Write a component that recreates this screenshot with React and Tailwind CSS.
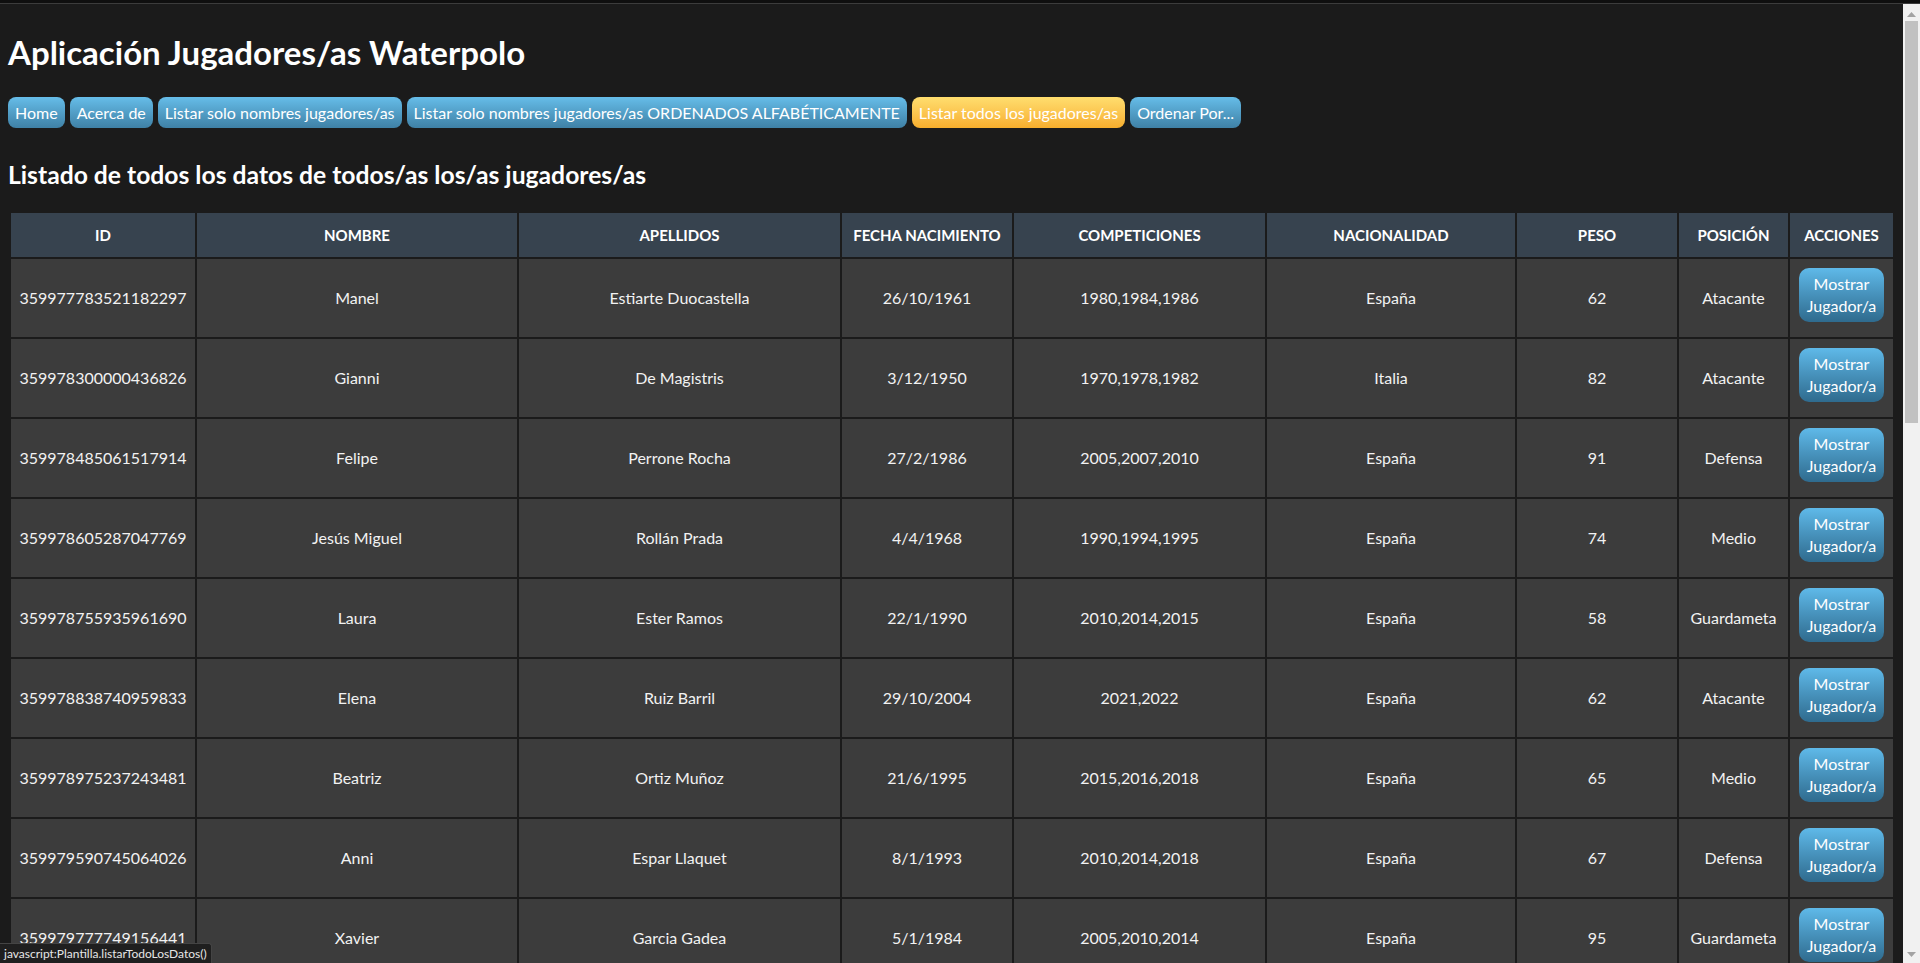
import React from 'react'

const jugadores = [
  ['359977783521182297', 'Manel', 'Estiarte Duocastella', '26/10/1961', '1980,1984,1986', 'España', '62', 'Atacante'],
  ['359978300000436826', 'Gianni', 'De Magistris', '3/12/1950', '1970,1978,1982', 'Italia', '82', 'Atacante'],
  ['359978485061517914', 'Felipe', 'Perrone Rocha', '27/2/1986', '2005,2007,2010', 'España', '91', 'Defensa'],
  ['359978605287047769', 'Jesús Miguel', 'Rollán Prada', '4/4/1968', '1990,1994,1995', 'España', '74', 'Medio'],
  ['359978755935961690', 'Laura', 'Ester Ramos', '22/1/1990', '2010,2014,2015', 'España', '58', 'Guardameta'],
  ['359978838740959833', 'Elena', 'Ruiz Barril', '29/10/2004', '2021,2022', 'España', '62', 'Atacante'],
  ['359978975237243481', 'Beatriz', 'Ortiz Muñoz', '21/6/1995', '2015,2016,2018', 'España', '65', 'Medio'],
  ['359979590745064026', 'Anni', 'Espar Llaquet', '8/1/1993', '2010,2014,2018', 'España', '67', 'Defensa'],
  ['359979777749156441', 'Xavier', 'Garcia Gadea', '5/1/1984', '2005,2010,2014', 'España', '95', 'Guardameta'],
]

const columnas = [
  { label: 'ID', w: 'w-[184px]' },
  { label: 'NOMBRE', w: 'w-[320px]' },
  { label: 'APELLIDOS', w: 'w-[321px]' },
  { label: 'FECHA NACIMIENTO', w: 'w-[170px]' },
  { label: 'COMPETICIONES', w: 'w-[251px]' },
  { label: 'NACIONALIDAD', w: 'w-[248px]' },
  { label: 'PESO', w: 'w-[160px]' },
  { label: 'POSICIÓN', w: 'w-[109px]' },
  { label: 'ACCIONES', w: 'w-[103px]' },
]

const menu = [
  'Home',
  'Acerca de',
  'Listar solo nombres jugadores/as',
  'Listar solo nombres jugadores/as ORDENADOS ALFABÉTICAMENTE',
  'Listar todos los jugadores/as',
  'Ordenar Por...',
]

function Boton({ children, activo }) {
  return (
    <a href="#" className={`inline-block rounded-[8px] px-[7px] py-[5px] text-[16px] leading-[21px] text-white ${activo ? 'bg-gradient-to-b from-[#ffde6e] to-[#f7ae2c]' : 'bg-gradient-to-b from-[#66bde9] to-[#3f81a6]'}`}>
      {children}
    </a>
  )
}

export default function App() {
  return (
    <div className="relative flex h-[963px] flex-col overflow-hidden bg-[#1b1b1b] font-['Lato','Noto_Sans',sans-serif] text-white">
      <div className="h-[4px] shrink-0 border-b border-[#3c3c3c] bg-[#0f0f0f]" />
      <div className="flex min-h-0 flex-1">
        <main className="min-w-0 flex-1 overflow-hidden px-[8px]">
          <h1 className="mt-[28px] text-[33px] font-bold leading-[40px]">Aplicación Jugadores/as Waterpolo</h1>

          <nav className="mt-[25px] flex gap-[5px]">
            {menu.map(m => <Boton key={m} activo={m === 'Listar todos los jugadores/as'}>{m}</Boton>)}
          </nav>

          <h2 className="mt-[32px] text-[24.7px] font-bold leading-[30px]">Listado de todos los datos de todos/as los/as jugadores/as</h2>

          <table className="mt-[20px] w-full table-fixed border-separate border-spacing-[2px] border border-[#1b1b1b] text-[16px]">
            <thead>
              <tr className="h-[44px]">
                {columnas.map(c => (
                  <th key={c.label} className={`${c.w} bg-[#37434f] px-1 text-[15px] font-bold text-white`}>{c.label}</th>
                ))}
              </tr>
            </thead>
            <tbody>
              {jugadores.map(j => (
                <tr key={j[0]} className="h-[78px]">
                  {j.map((v, i) => (
                    <td key={i} className="bg-[#3c3c3c] px-1 text-center text-[#f2f2f2]">{v}</td>
                  ))}
                  <td className="bg-[#3c3c3c] px-[6px] text-center">
                    <button className="mt-[-6px] w-[85px] rounded-[10px] bg-gradient-to-b from-[#5fb9e9] to-[#2f6b8e] px-[4px] py-[5px] text-[16px] leading-[22px] text-white">
                      Mostrar Jugador/a
                    </button>
                  </td>
                </tr>
              ))}
            </tbody>
          </table>
        </main>

        <div className="relative w-[17px] shrink-0 bg-[#f1f1f1]">
          <svg className="absolute left-[4px] top-[8px]" width="9" height="6" viewBox="0 0 9 6">
            <path d="M4.5 0 L9 5 L0 5 Z" fill="#a3a3a3" />
          </svg>
          <div className="absolute left-[2px] top-[17px] h-[402px] w-[13px] bg-[#c1c1c1]" />
          <svg className="absolute bottom-[5px] left-[4px]" width="9" height="6" viewBox="0 0 9 6">
            <path d="M0 0 L9 0 L4.5 5 Z" fill="#a3a3a3" />
          </svg>
        </div>
      </div>

      <div className="absolute bottom-0 left-0 rounded-tr-[3px] border-t border-r border-[#444] bg-[#1f1f1f] px-[4px] py-[2px] text-[12px] leading-[15px] text-[#e6e6e6]">
        javascript:Plantilla.listarTodoLosDatos()
      </div>
    </div>
  )
}
